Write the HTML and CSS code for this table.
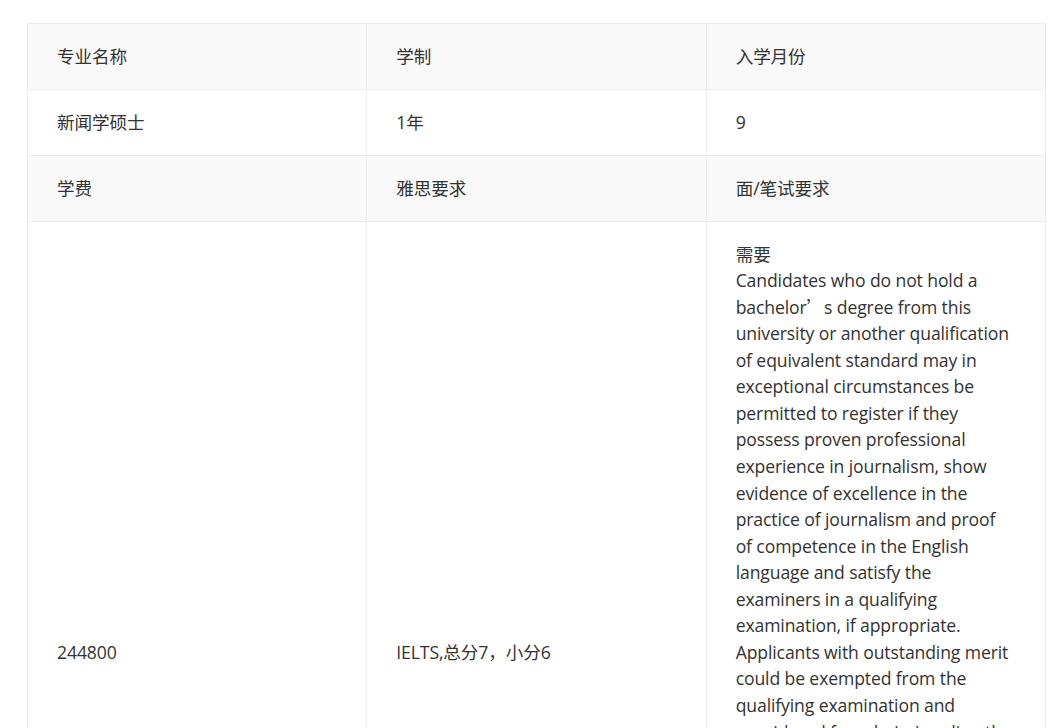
FILE: index.html
```html
<!DOCTYPE html>
<html lang="zh-CN">
<head>
<meta charset="utf-8">
<title>专业信息</title>
<link rel="stylesheet" href="styles.css">
</head>
<body>
<div class="page">
  <table class="info">
    <colgroup><col><col><col></colgroup>
    <tbody>
      <tr class="head">
        <td>专业名称</td>
        <td>学制</td>
        <td>入学月份</td>
      </tr>
      <tr>
        <td>新闻学硕士</td>
        <td>1年</td>
        <td>9</td>
      </tr>
      <tr class="head">
        <td>学费</td>
        <td>雅思要求</td>
        <td>面/笔试要求</td>
      </tr>
      <tr>
        <td>244800</td>
        <td>IELTS,总分7，小分6</td>
        <td class="long"><span class="lead">需要</span>Candidates who do not hold a bachelor<span class="fw">’</span>s degree from this university or another qualification of equivalent standard may in exceptional circumstances be permitted to register if they possess proven professional experience in journalism, show evidence of excellence in the practice of journalism and proof of competence in the English language and satisfy the examiners in a qualifying examination, if appropriate. Applicants with outstanding merit could be exempted from the qualifying examination and considered for admission directly. Shortlisted applicants may be invited to attend an interview and a written test, which assess their news sense, their ability to write clearly in English and their general knowledge of current affairs. Applicants should also submit a personal statement, two referee reports and samples of their published work together with their online application before the deadline.</td>
      </tr>
    </tbody>
  </table>
</div>
</body>
</html>
```
FILE: styles.css
```css
html, body {
  margin: 0;
  padding: 0;
  background: #fff;
}
.page {
  padding: 23px 0 0 27px;
}
.info {
  width: 1019px;
  table-layout: fixed;
  border-collapse: collapse;
  font-family: "Open Sans", "Noto Sans CJK SC", sans-serif;
  font-size: 17.6px;
  line-height: 26.4px;
  letter-spacing: -0.12px;
  color: #333;
}
.info td {
  border: 1px solid #ededed;
  padding: 19.3px 30px 19.3px 29px;
  vertical-align: middle;
  text-align: left;
  word-wrap: break-word;
}
.info tr.head td {
  background: #f9f9f9;
}
.info td.long {
  padding-top: 20px;
  line-height: 26.56px;
}
.lead {
  display: block;
  line-height: 25px;
}
.fw {
  font-family: "Noto Sans CJK SC", sans-serif;
}
```
